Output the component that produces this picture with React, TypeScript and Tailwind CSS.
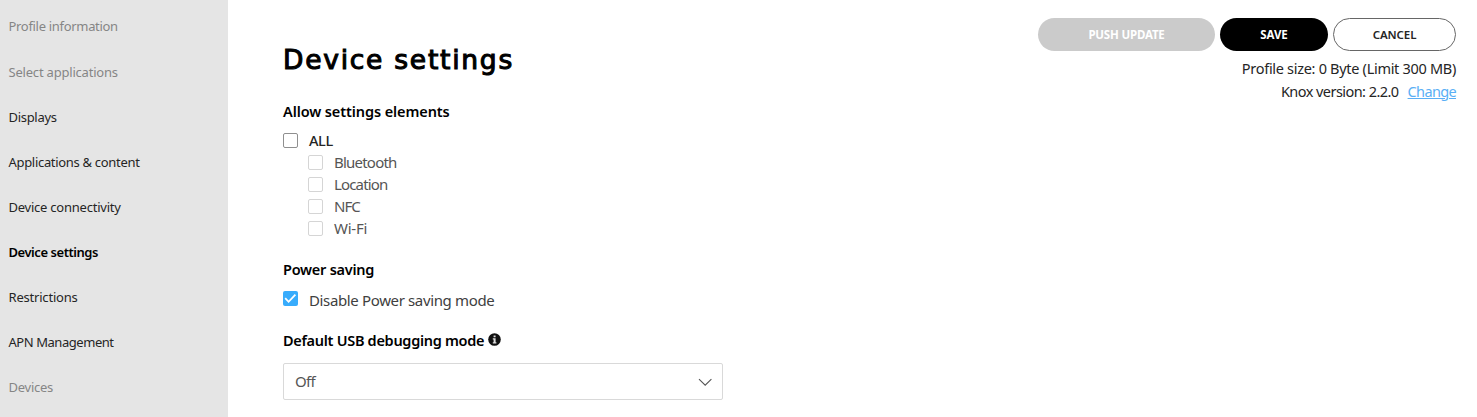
import type { ReactNode } from 'react';

type NavItem = { label: string; className: string };

const navItems: NavItem[] = [
  { label: 'Profile information', className: 'text-[#858585] tracking-[-0.31px]' },
  { label: 'Select applications', className: 'text-[#858585] tracking-[-0.2px]' },
  { label: 'Displays', className: 'text-[#252525] tracking-[-0.3px]' },
  { label: 'Applications & content', className: 'text-[#252525] tracking-[-0.31px]' },
  { label: 'Device connectivity', className: 'text-[#252525] tracking-[-0.23px]' },
  { label: 'Device settings', className: 'font-semibold text-black tracking-[-0.45px]' },
  { label: 'Restrictions', className: 'text-[#252525] tracking-[-0.2px]' },
  { label: 'APN Management', className: 'text-[#252525] tracking-[-0.45px]' },
  { label: 'Devices', className: 'text-[#858585] tracking-[-0.25px]' },
];

const elements = [
  { label: 'Bluetooth', className: 'tracking-[-0.78px]' },
  { label: 'Location', className: 'tracking-[-0.85px]' },
  { label: 'NFC', className: 'tracking-[-1px]' },
  { label: 'Wi-Fi', className: 'tracking-[-0.25px]' },
];

function Sidebar() {
  return (
    <nav className="h-[417px] w-[228px] shrink-0 overflow-hidden bg-[#e5e5e5] pt-[4.6px] pl-[8.5px]">
      {navItems.map((item) => (
        <a key={item.label} className={`flex h-[45.12px] items-center text-[13px] ${item.className}`}>
          {item.label}
        </a>
      ))}
    </nav>
  );
}

function Heading({ children, className }: { children: ReactNode; className: string }) {
  return <h2 className={`flex h-5 items-center text-[14.5px] font-semibold whitespace-nowrap text-black ${className}`}>{children}</h2>;
}

function Box({ className }: { className: string }) {
  return <span className={`size-[15px] shrink-0 rounded-[2px] border bg-white ${className}`} />;
}

function InfoIcon() {
  return (
    <svg width="13" height="13" viewBox="0 0 13 13" className="mb-[3px] ml-1 shrink-0">
      <circle cx="6.5" cy="6.5" r="6.3" fill="#111" />
      <path d="M5.6 2.4h2v1.8h-2zM4.8 5.3h2.8v4h.8v1.1H4.8V9.3h.8V6.4h-.8z" fill="#ddd" />
    </svg>
  );
}

function Actions() {
  return (
    <aside className="flex shrink-0 flex-col items-end pt-[18px] text-[#252525]">
      <div className="flex gap-[5px] text-[11.5px]">
        <button className="h-[33px] w-[177px] rounded-full bg-[#cbcbcb] font-bold tracking-[-0.18px] text-white">PUSH UPDATE</button>
        <button className="h-[33px] w-[108px] rounded-full bg-black font-bold tracking-[-0.1px] text-white">SAVE</button>
        <button className="h-[33px] w-[123px] rounded-full border border-[#666] font-semibold tracking-[-0.1px]">CANCEL</button>
      </div>
      <div className="mt-[6px] flex h-[23px] items-center text-[14.5px] tracking-[-0.3px]">Profile size: 0 Byte (Limit 300 MB)</div>
      <div className="flex h-[23px] items-center text-[14.5px]">
        <span className="tracking-[-0.55px]">Knox version: 2.2.0</span>
        <a className="ml-[9px] tracking-[-0.65px] text-[#5aaff5] underline">Change</a>
      </div>
    </aside>
  );
}

export default function App() {
  return (
    <div className="flex h-[417px] w-full overflow-hidden bg-white font-['Noto_Sans',sans-serif]">
      <Sidebar />
      <main className="flex-1 pl-[55px]">
        <h1 className="mt-[40px] flex h-10 items-center font-['DejaVu_Sans',sans-serif] text-[26.5px] tracking-[1.75px] whitespace-nowrap text-black [-webkit-text-stroke:1.1px_black]">
          Device settings
        </h1>
        <Heading className="mt-[22px] tracking-[-0.1px]">Allow settings elements</Heading>
        <label className="mt-[7.5px] flex h-[22px] items-center gap-[11px] text-[14.5px] font-medium tracking-[-0.4px] text-[#252525]">
          <Box className="border-[#8f8f8f]" />
          ALL
        </label>
        <ul className="-mt-[0.5px] pl-[25.4px] text-[15px] text-[#555]">
          {elements.map((e) => (
            <li key={e.label} className={`flex h-[22.2px] items-center gap-[10.6px] ${e.className}`}>
              <Box className="border-[#d5d5d5]" />
              {e.label}
            </li>
          ))}
        </ul>
        <Heading className="mt-[20.2px] tracking-[-0.25px]">Power saving</Heading>
        <label className="mt-[9px] flex h-[22px] items-center gap-[11px] text-[15px] tracking-[-0.36px] text-[#404040]">
          <span className="mb-[3px] flex size-[15px] items-center justify-center rounded-[2px] bg-[#38acfc]">
            <svg width="15" height="15" viewBox="0 0 15 15" fill="none" stroke="#fff" strokeWidth="1.8">
              <path d="M2.2 7.2 5.6 10.8 12.4 3.6" />
            </svg>
          </span>
          Disable Power saving mode
        </label>
        <Heading className="mt-[20px] tracking-[-0.29px]">
          Default USB debugging mode
          <InfoIcon />
        </Heading>
        <div className="mt-[11.6px] flex h-[37px] w-[440px] items-center justify-between rounded-[2px] border border-[#d9d9d9] pr-[9px] pl-[11px] text-[15px] tracking-[-0.7px] text-[#555]">
          Off
          <svg width="15" height="9" viewBox="0 0 15 9" fill="none" stroke="#555" strokeWidth="1.1" className="mt-0.5">
            <path d="M1 1.2 7.2 7.2 13.4 1.2" />
          </svg>
        </div>
      </main>
      <div className="pr-[21px]">
        <Actions />
      </div>
    </div>
  );
}
